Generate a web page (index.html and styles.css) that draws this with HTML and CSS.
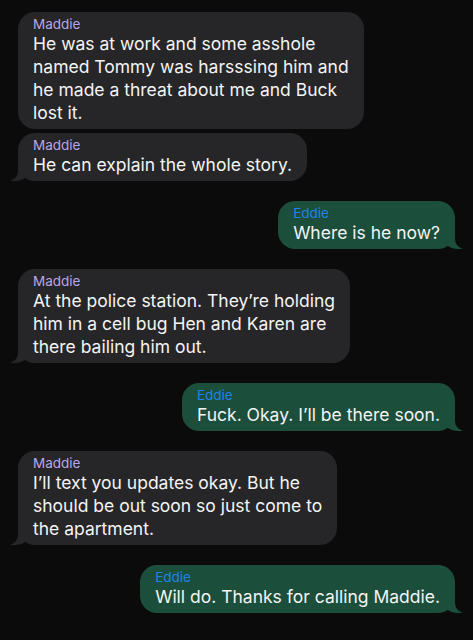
FILE: index.html
```html
<!DOCTYPE html>
<html lang="en">
<head>
    <meta charset="UTF-8">
    <meta name="viewport" content="width=device-width, initial-scale=1.0">
    <title>Messages</title>
    <link rel="stylesheet" href="styles.css">
</head>
<body>
    <div class="thread">
        <div class="bubble them">
            <div class="name">Maddie</div>
            <div class="text">He was at work and some asshole<br>named Tommy was harsssing him and<br>he made a threat about me and Buck<br>lost it.</div>
        </div>
        <div class="bubble them tail close">
            <div class="name">Maddie</div>
            <div class="text">He can explain the whole story.</div>
        </div>
        <div class="bubble me tail">
            <div class="name">Eddie</div>
            <div class="text">Where is he now?</div>
        </div>
        <div class="bubble them tail">
            <div class="name">Maddie</div>
            <div class="text">At the police station. They’re holding<br>him in a cell bug Hen and Karen are<br>there bailing him out.</div>
        </div>
        <div class="bubble me tail">
            <div class="name">Eddie</div>
            <div class="text">Fuck. Okay. I’ll be there soon.</div>
        </div>
        <div class="bubble them tail">
            <div class="name">Maddie</div>
            <div class="text">I’ll text you updates okay. But he<br>should be out soon so just come to<br>the apartment.</div>
        </div>
        <div class="bubble me tail">
            <div class="name">Eddie</div>
            <div class="text">Will do. Thanks for calling Maddie.</div>
        </div>
    </div>
</body>
</html>
```

FILE: styles.css
```css
body {
    margin: 0;
    background-color: #0b0b0b;
    font-family: Inter, "Noto Sans", sans-serif;
    color: #f4f4f4;
    height: 640px;
    overflow: hidden;
}

.thread {
    display: flex;
    flex-direction: column;
    padding: 12px 18px;
    gap: 20px;
}

.bubble {
    position: relative;
    padding: 4px 15px 5px;
    border-radius: 17px;
    white-space: nowrap;
}

.bubble.close {
    margin-top: -16px;
}

.them {
    align-self: flex-start;
    background-color: #262628;
}

.me {
    align-self: flex-end;
    background-color: #1b4e3b;
}

.name {
    font-size: 13.5px;
    line-height: 16px;
}

.them .name {
    color: #bca4e6;
}

.me .name {
    color: #1e83ee;
}

.text {
    font-size: 17.5px;
    line-height: 23px;
}

/* tails */
.tail::before,
.tail::after {
    content: "";
    position: absolute;
    bottom: 0;
    height: 20px;
}

.them.tail::before {
    left: -7px;
    width: 20px;
    background-color: #262628;
    border-bottom-right-radius: 16px 14px;
}

.them.tail::after {
    left: -10px;
    width: 10px;
    background-color: #0b0b0b;
    border-bottom-right-radius: 10px;
}

.me.tail::before {
    right: -7px;
    width: 20px;
    background-color: #1b4e3b;
    border-bottom-left-radius: 16px 14px;
}

.me.tail::after {
    right: -10px;
    width: 10px;
    background-color: #0b0b0b;
    border-bottom-left-radius: 10px;
}
```
